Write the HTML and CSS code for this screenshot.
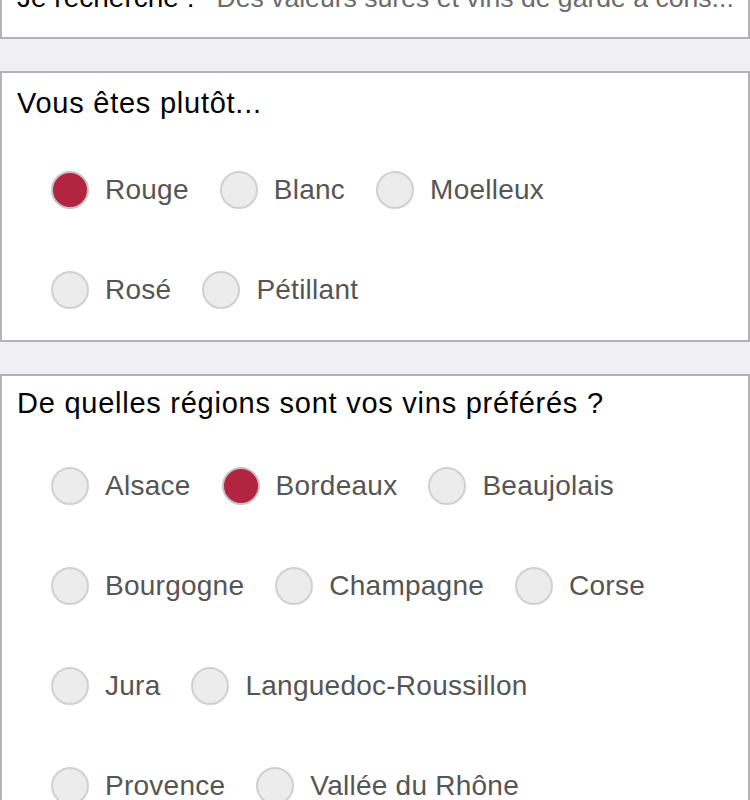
FILE: index.html
```html
<!DOCTYPE html>
<html lang="fr">

<head>
    <meta charset="UTF-8">
    <meta name="viewport" content="width=device-width, initial-scale=1.0">
    <title>Questionnaire vins</title>
    <link rel="stylesheet" href="styles.css">
</head>

<body>
    <div class="page">
        <!-- Summary of the search -->
        <div class="card summary">
            <span class="summary-label">Je recherche :</span>
            <span class="summary-value">Des valeurs sûres et vins de garde à cons...</span>
        </div>

        <!-- Wine colour -->
        <div class="card question question-type">
            <h2 class="question-title">Vous êtes plutôt...</h2>
            <div class="choice-row">
                <label class="choice"><input type="radio" name="type" checked><span>Rouge</span></label>
                <label class="choice"><input type="radio" name="type"><span>Blanc</span></label>
                <label class="choice"><input type="radio" name="type"><span>Moelleux</span></label>
            </div>
            <div class="choice-row">
                <label class="choice"><input type="radio" name="type"><span>Rosé</span></label>
                <label class="choice"><input type="radio" name="type"><span>Pétillant</span></label>
            </div>
        </div>

        <!-- Favourite regions -->
        <div class="card question question-region">
            <h2 class="question-title">De quelles régions sont vos vins préférés ?</h2>
            <div class="choice-row">
                <label class="choice"><input type="radio" name="region"><span>Alsace</span></label>
                <label class="choice"><input type="radio" name="region" checked><span>Bordeaux</span></label>
                <label class="choice"><input type="radio" name="region"><span>Beaujolais</span></label>
            </div>
            <div class="choice-row">
                <label class="choice"><input type="radio" name="region"><span>Bourgogne</span></label>
                <label class="choice"><input type="radio" name="region"><span>Champagne</span></label>
                <label class="choice"><input type="radio" name="region"><span>Corse</span></label>
            </div>
            <div class="choice-row">
                <label class="choice"><input type="radio" name="region"><span>Jura</span></label>
                <label class="choice"><input type="radio" name="region"><span>Languedoc-Roussillon</span></label>
            </div>
            <div class="choice-row">
                <label class="choice"><input type="radio" name="region"><span>Provence</span></label>
                <label class="choice"><input type="radio" name="region"><span>Vallée du Rhône</span></label>
            </div>
        </div>
    </div>
</body>

</html>
```

FILE: styles.css
```css
* {
    margin: 0;
    padding: 0;
    box-sizing: border-box;
    font-family: 'Liberation Sans', Arial, sans-serif;
}

body {
    background: #efeff4;
    overflow-x: hidden;
}

.page {
    display: flex;
    flex-direction: column;
    gap: 32px;
    margin-top: -34px;
}

.card {
    background: #fff;
    border: 2px solid #b3b3b3;
}

.summary {
    display: flex;
    align-items: baseline;
    gap: 22px;
    padding: 13px 15px 22px;
    font-size: 28px;
    line-height: 34px;
    white-space: nowrap;
}

.summary-label {
    color: #000;
}

.summary-value {
    color: #6b6b6b;
    font-size: 26.6px;
}

.question {
    padding: 13px 15px 0;
}

.question-title {
    font-size: 29px;
    line-height: 34px;
    letter-spacing: 0.75px;
    font-weight: normal;
    color: #000;
    margin-bottom: 20px;
}

.question-region {
    padding-top: 10px;
}

.question-region .question-title {
    margin-bottom: 16px;
}

.choice-row {
    display: flex;
    align-items: center;
    gap: 31px;
    height: 100px;
    padding-left: 34px;
}

.choice {
    display: flex;
    align-items: center;
    gap: 16px;
    font-size: 28px;
    letter-spacing: 0.25px;
    color: #555;
    cursor: pointer;
}

.choice input {
    -webkit-appearance: none;
    appearance: none;
    width: 38px;
    height: 38px;
    border-radius: 50%;
    border: 2px solid #d0d0d0;
    background: #ececec;
    margin: 0;
}

.choice input:checked {
    background: #b2243f;
    border-color: #c4c4c4;
}
```
